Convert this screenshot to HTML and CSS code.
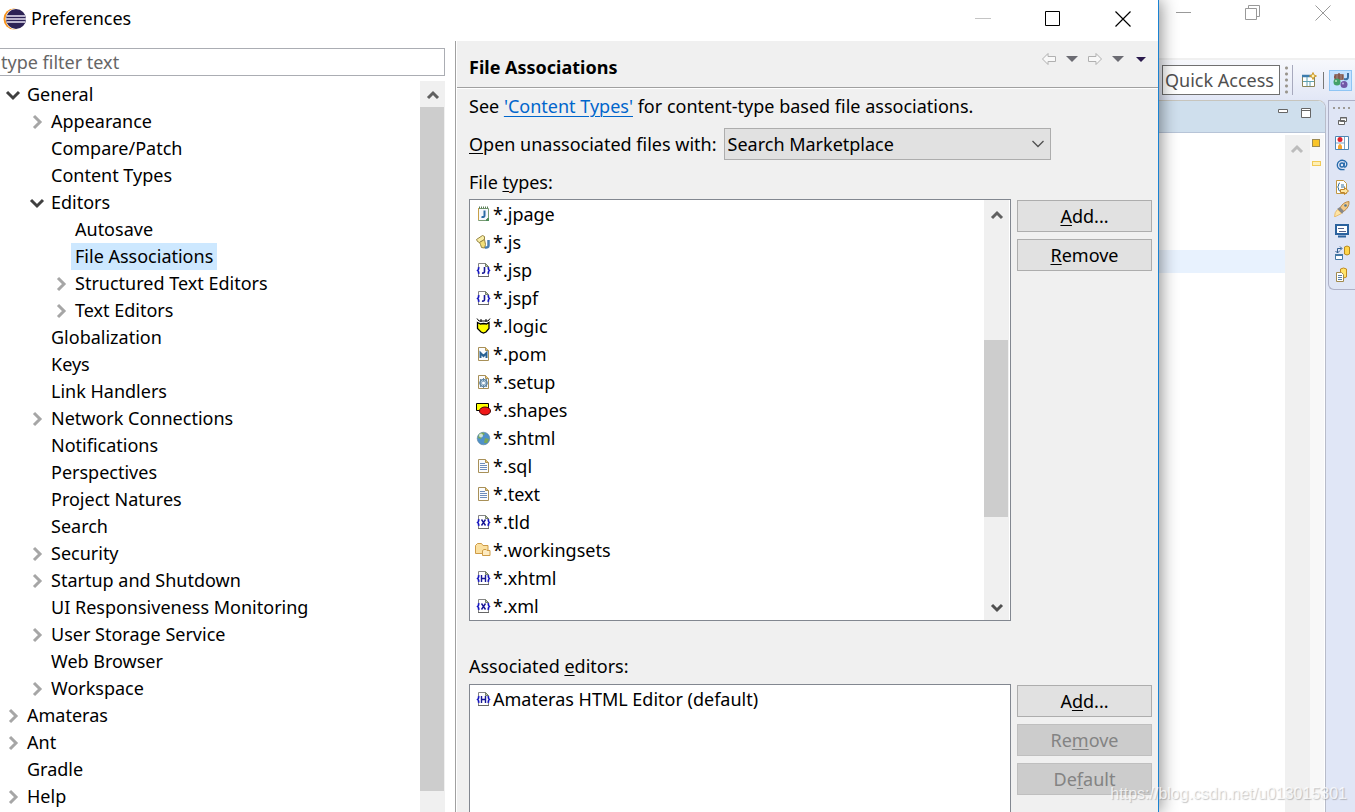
FILE: index.html
```html
<!DOCTYPE html>
<html lang="en">
<head>
<meta charset="utf-8">
<title>Preferences</title>
<link rel="stylesheet" href="styles.css">
</head>
<body>
<svg class="defs" aria-hidden="true">
  <symbol id="open" viewBox="0 0 16 16"><path d="M2 5l6 6 6-6" fill="none" stroke="#404040" stroke-width="3"/></symbol>
  <symbol id="closed" viewBox="0 0 16 16"><path d="M5 2l6 6-6 6" fill="none" stroke="#a6a6a6" stroke-width="3"/></symbol>
  <symbol id="up" viewBox="0 0 14 14"><path d="M2 10l5-5 5 5" fill="none" stroke="#606060" stroke-width="3"/></symbol>
  <symbol id="down" viewBox="0 0 14 14"><path d="M2 4l5 5 5-5" fill="none" stroke="#505050" stroke-width="3"/></symbol>
  <symbol id="back" viewBox="0 0 16 16"><path d="M1.500 8L7 2.500V5.500H14.500V10.500H7V13.500Z" fill="#f8f8f8" stroke="#b0b0b0"/></symbol>
  <symbol id="forward" viewBox="0 0 16 16"><path d="M14.500 8L9 2.500V5.500H1.500V10.500H9V13.500Z" fill="#f8f8f8" stroke="#b0b0b0"/></symbol>
  <symbol id="sheet" viewBox="0 0 16 16"><path d="M3.500 1.500h7l3 3v10h-10z" fill="#fbfcfe" stroke="#a89058"/><path d="M10.500 1.500v3h3" fill="#e9c878" stroke="#a89058"/></symbol>
  <symbol id="code" viewBox="0 0 16 16"><path d="M3.500 5.500v-4h7l3 3v1M3.500 11.500v3h10v-3" fill="#fff" stroke="#858585"/><path d="M10.500 1.500v3h3z" fill="#b9c4ac" stroke="#75806a"/><path d="M3 14.500h11" stroke="#666"/><path d="M4.500 5.500L3.500 6v1.500l-1 1 1 1V11l1 .5M12.500 5.500l1 .5v1.500l1 1-1 1V11l-1 .5" fill="none" stroke="#1515c0" stroke-width="1.500"/></symbol>
  <symbol id="text" viewBox="0 0 16 16"><use href="#sheet"/><path d="M5 5.500h5M5 7.500h7M5 9.500h7M5 11.500h7" stroke="#6d8dbc"/></symbol>
</svg>

<main class="dialog">
  <header class="titlebar">
    <svg class="logo" viewBox="0 0 24 22"><circle cx="12" cy="11" r="10.500" fill="#f7941e"/><circle cx="14" cy="11" r="10.500" fill="#fff"/><circle cx="14" cy="11" r="10" fill="#2c2255"/><path d="M5 8h18M4 11h20M5 14h18" stroke="#e7e3f4" stroke-width="1.600"/></svg>
    <h1>Preferences</h1>
    <button class="winbtn" aria-label="Minimize"><svg viewBox="0 0 16 16"><path d="M0 7.500h16" stroke="#c4c4c4"/></svg></button>
    <button class="winbtn" aria-label="Maximize"><svg viewBox="0 0 16 16"><path d="M.500.500h14v14h-14z" fill="none" stroke="#000"/></svg></button>
    <button class="winbtn" aria-label="Close"><svg viewBox="0 0 16 16"><path d="M.500.500l15 15M15.500.500l-15 15" stroke="#000" stroke-width="1.200"/></svg></button>
  </header>
  <div class="content">
    <nav class="sidebar">
      <input class="filter" type="text" placeholder="type filter text" aria-label="Filter">
      <div class="treebox">
        <ul class="tree">
          <li><span class="node"><svg><use href="#open"/></svg><b>General</b></span>
            <ul>
              <li><span class="node"><svg><use href="#closed"/></svg><b>Appearance</b></span></li>
              <li><span class="node"><svg></svg><b>Compare/Patch</b></span></li>
              <li><span class="node"><svg></svg><b>Content Types</b></span></li>
              <li><span class="node"><svg><use href="#open"/></svg><b>Editors</b></span>
                <ul>
                  <li><span class="node"><svg></svg><b>Autosave</b></span></li>
                  <li><span class="node selected"><svg></svg><b>File Associations</b></span></li>
                  <li><span class="node"><svg><use href="#closed"/></svg><b>Structured Text Editors</b></span></li>
                  <li><span class="node"><svg><use href="#closed"/></svg><b>Text Editors</b></span></li>
                </ul></li>
              <li><span class="node"><svg></svg><b>Globalization</b></span></li>
              <li><span class="node"><svg></svg><b>Keys</b></span></li>
              <li><span class="node"><svg></svg><b>Link Handlers</b></span></li>
              <li><span class="node"><svg><use href="#closed"/></svg><b>Network Connections</b></span></li>
              <li><span class="node"><svg></svg><b>Notifications</b></span></li>
              <li><span class="node"><svg></svg><b>Perspectives</b></span></li>
              <li><span class="node"><svg></svg><b>Project Natures</b></span></li>
              <li><span class="node"><svg></svg><b>Search</b></span></li>
              <li><span class="node"><svg><use href="#closed"/></svg><b>Security</b></span></li>
              <li><span class="node"><svg><use href="#closed"/></svg><b>Startup and Shutdown</b></span></li>
              <li><span class="node"><svg></svg><b>UI Responsiveness Monitoring</b></span></li>
              <li><span class="node"><svg><use href="#closed"/></svg><b>User Storage Service</b></span></li>
              <li><span class="node"><svg></svg><b>Web Browser</b></span></li>
              <li><span class="node"><svg><use href="#closed"/></svg><b>Workspace</b></span></li>
            </ul></li>
          <li><span class="node"><svg><use href="#closed"/></svg><b>Amateras</b></span></li>
          <li><span class="node"><svg><use href="#closed"/></svg><b>Ant</b></span></li>
          <li><span class="node"><svg></svg><b>Gradle</b></span></li>
          <li><span class="node"><svg><use href="#closed"/></svg><b>Help</b></span></li>
        </ul>
        <div class="scroll tree-scroll"><svg><use href="#up"/></svg><i class="thumb"></i></div>
      </div>
    </nav>

    <section class="page">
      <header class="pagehead">
        <h2>File Associations</h2>
        <div class="history">
          <button aria-label="Back"><svg viewBox="0 0 16 16"><use href="#back"/></svg></button>
          <button aria-label="Back history"><svg viewBox="0 0 16 16"><path d="M2 5h12L8 11z" fill="#6b6b72"/></svg></button>
          <button aria-label="Forward"><svg viewBox="0 0 16 16"><use href="#forward"/></svg></button>
          <button aria-label="Forward history"><svg viewBox="0 0 16 16"><path d="M2 5h12L8 11z" fill="#6b6b72"/></svg></button>
          <button aria-label="Menu"><svg viewBox="0 0 16 16"><path d="M3 6h10L8 11z" fill="#2b1b4d"/></svg></button>
        </div>
      </header>
      <div class="form">
        <p class="line">See <a href="#types">'Content Types'</a> for content-type based file associations.</p>
        <div class="openwith">
          <label for="with"><u>O</u>pen unassociated files with:</label>
          <span class="combo"><select id="with"><option>Search Marketplace</option></select><svg viewBox="0 0 12 8"><path d="M.500 1l5.500 5.500L11.500 1" fill="none" stroke="#505050" stroke-width="1.300"/></svg></span>
        </div>
        <p class="line types" id="types">File <u>t</u>ypes:</p>
        <div class="pair">
          <div class="list">
            <ul>
              <li><svg viewBox="0 0 16 16"><path d="M3.500 2.500h10v9l-3 3h-7z" fill="#f4f8fd" stroke="#789a72"/><path d="M3.500 2v12" stroke="#c8a048"/><path d="M4 1.500h10" stroke="#5b7c58" stroke-width="2" stroke-dasharray="1 1"/><path d="M10 15l4-4v4z" fill="#4c8c58"/><path d="M9.500 4.500v5q0 2-3 1.500" fill="none" stroke="#2b6ca5" stroke-width="2"/></svg>*.jpage</li>
              <li><svg viewBox="0 0 16 16"><path d="M1.500 5.500l6-4 2 1v3l-5 3-2-1z" fill="#f8eda6" stroke="#958442"/><path d="M4.500 8.500l5-3 1 5-1 3.500-3-.500-1-3z" fill="#f2df79" stroke="#958442"/><path d="M13.500 6v5.500q0 2.500-3.500 2" fill="none" stroke="#487db1" stroke-width="2.500"/></svg>*.js</li>
              <li><svg viewBox="0 0 16 16"><use href="#code"/><path d="M9.500 5v4.500q0 2-2.500 1.500" fill="none" stroke="#171794" stroke-width="1.600"/></svg>*.jsp</li>
              <li><svg viewBox="0 0 16 16"><use href="#code"/><path d="M9.500 5v4.500q0 2-2.500 1.500" fill="none" stroke="#171794" stroke-width="1.600"/></svg>*.jspf</li>
              <li><svg viewBox="0 0 16 16"><path d="M2.500 4.500l3 1.500 3-.500 3 .500 2.500-1.500v6L11 14l-2.500 1L6 14l-3.500-3.500z" fill="#ff0" stroke="#000" stroke-width="1.300"/><path d="M2 .500l2 2.500h9l2-2.500M6 1v3M11 1v3" fill="none" stroke="#000"/></svg>*.logic</li>
              <li><svg viewBox="0 0 16 16"><use href="#sheet"/><path d="M5.500 12V7l3 3 3-3v5" fill="none" stroke="#2a6293" stroke-width="2"/></svg>*.pom</li>
              <li><svg viewBox="0 0 16 16"><use href="#sheet"/><circle cx="8.500" cy="9" r="3.500" fill="#c9deee" stroke="#557893" stroke-width="1.200"/><path d="M5 5l7 8M12 5l-7 8M8.500 4v10M4 9h9" stroke="#648aa8"/><circle cx="8.500" cy="9" r="1.500" fill="#fff"/></svg>*.setup</li>
              <li><svg viewBox="0 0 16 16"><path d="M1.500 1.500h12v7h-12z" fill="#ff0" stroke="#000"/><ellipse cx="10" cy="9" rx="5.500" ry="4" fill="#f01818" stroke="#400"/></svg>*.shapes</li>
              <li><svg viewBox="0 0 16 16"><circle cx="8.500" cy="8.500" r="6.300" fill="#4f91c9" stroke="#5b8298" stroke-width=".6"/><path d="M4 4q4-3 6 0l-3 2-1 3-3-1zM10 8l4 1-2 4-3 0z" fill="#78a857"/><circle cx="6" cy="5.500" r="2" fill="#e6f1f4" opacity=".8"/></svg>*.shtml</li>
              <li><svg><use href="#text"/></svg>*.sql</li>
              <li><svg><use href="#text"/></svg>*.text</li>
              <li><svg viewBox="0 0 16 16"><use href="#code"/><path d="M6.500 5.500l4 6M10.500 5.500l-4 6" stroke="#171794" stroke-width="1.400"/></svg>*.tld</li>
              <li><svg viewBox="0 0 16 16"><path d="M.500 11.500v-8l2-2h4l1.500 2h5v8z" fill="#fbe0a0" stroke="#ce9b46"/><path d="M7.500 13.500v-5l1.500-1h2l1 1h3v5z" fill="#fdebc2" stroke="#ce9b46"/></svg>*.workingsets</li>
              <li><svg viewBox="0 0 16 16"><use href="#code"/><path d="M6.500 5v7M10.500 5v7M6.500 8.500h4" stroke="#171794" stroke-width="1.400"/></svg>*.xhtml</li>
              <li><svg viewBox="0 0 16 16"><use href="#code"/><path d="M6.500 5.500l4 6M10.500 5.500l-4 6" stroke="#171794" stroke-width="1.400"/></svg>*.xml</li>
            </ul>
            <div class="scroll list-scroll"><svg><use href="#up"/></svg><i class="thumb"></i><svg><use href="#down"/></svg></div>
          </div>
          <div class="buttons"><button><u>A</u>dd...</button><button><u>R</u>emove</button></div>
        </div>
        <p class="line editors">Associated <u>e</u>ditors:</p>
        <div class="pair grow">
          <div class="list">
            <ul><li><svg viewBox="0 0 16 16"><use href="#code"/><path d="M6.500 5v7M10.500 5v7M6.500 8.500h4" stroke="#171794" stroke-width="1.400"/></svg>Amateras HTML Editor (default)</li></ul>
          </div>
          <div class="buttons"><button>A<u>d</u>d...</button><button disabled>Re<u>m</u>ove</button><button disabled>De<u>f</u>ault</button></div>
        </div>
      </div>
    </section>
  </div>
</main>

<aside class="workbench">
  <div class="maintitle">
    <button aria-label="Minimize window"><svg viewBox="0 0 16 16"><path d="M1 7.500h15" stroke="#999"/></svg></button>
    <button aria-label="Restore window"><svg viewBox="0 0 16 16"><path d="M.500 3.500h11v11H.500zM3.500 3V.500h11v11H12" fill="none" stroke="#999"/></svg></button>
    <button aria-label="Close window"><svg viewBox="0 0 16 16"><path d="M.500.500l15 15M15.500.500l-15 15" stroke="#999"/></svg></button>
  </div>
  <div class="toolbar">
    <input class="quick" type="text" placeholder="Quick Access" aria-label="Quick Access">
    <i class="grip"></i>
    <button aria-label="Open perspective"><svg viewBox="0 0 16 16"><path d="M1.500 3.500h12v11h-12z" fill="#fff" stroke="#8a855a"/><path d="M1 4h10" stroke="#3d7cae" stroke-width="2.500"/><path d="M6 5v9M2 9.500h11M9 10v4" stroke="#5fa1b1"/><path d="M12 .500l1 2.500 2.500 1L13 5l-1 2.500L11 5 8.500 4 11 3z" fill="#fff3b0" stroke="#d09a2a"/></svg></button>
    <i class="sep"></i>
    <button class="active" aria-label="Java EE"><svg viewBox="0 0 18 18"><path d="M3 4h8v4H3zM7 2v8M2 6h9" fill="none" stroke="#824d3c" stroke-width="1.300"/><path d="M16 2v4q0 3-4 2" fill="none" stroke="#3970a5" stroke-width="2"/><circle cx="5" cy="11" r="3.500" fill="#42a168"/><circle cx="12" cy="13.500" r="3.500" fill="#7157a6"/><circle cx="4" cy="10" r="1" fill="#b9e2bd"/><circle cx="11" cy="12.500" r="1" fill="#c3b5e5"/></svg></button>
  </div>
  <div class="workarea">
    <div class="editor">
      <div class="tabs">
        <button aria-label="Minimize view"><svg viewBox="0 0 12 12"><path d="M1.500 2.500h9v3h-9z" fill="#fff" stroke="#666"/></svg></button>
        <button aria-label="Maximize view"><svg viewBox="0 0 12 12"><path d="M1.500 1.500h9v9h-9zM1.500 3.500h9" fill="#fff" stroke="#666"/></svg></button>
      </div>
      <div class="source">
        <div class="code"><i class="current"></i></div>
        <div class="gutter"><svg viewBox="0 0 14 14"><path d="M2 10l5-5 5 5" fill="none" stroke="#bcbcbc" stroke-width="3"/></svg></div>
        <div class="ruler"><i class="mark"></i><i class="warn"></i></div>
      </div>
    </div>
    <div class="trim">
      <div class="views">
        <i class="dots"></i>
        <button aria-label="Restore"><svg viewBox="0 0 16 16"><path d="M6.500 4.500h6v4h-6zM4.500 7.500h6v4h-6z" fill="#fff" stroke="#666"/><path d="M6 5h7M4 8h7" stroke="#666"/></svg></button>
        <button aria-label="Markers"><svg viewBox="0 0 16 16"><path d="M1.500 1.500h13v13h-13z" fill="#fff" stroke="#4d86b4"/><path d="M2 8h9M10.500 2v12" stroke="#7ca5c7"/><circle cx="6" cy="4.500" r="2.500" fill="#df2430"/><path d="M4 14v-3q2-4 4 0v3z" fill="#f5a531"/></svg></button>
        <button aria-label="Properties"><svg viewBox="0 0 16 16"><circle cx="8" cy="8" r="2" fill="none" stroke="#276bac" stroke-width="1.400"/><path d="M10.500 5.500l-.5 3.500q0 1.500 1.500 1 2-2 1-4.500-2-3-6-2-4 2-3 6 1.500 4 7 3" fill="none" stroke="#276bac" stroke-width="1.300"/></svg></button>
        <button aria-label="Snippets"><svg viewBox="0 0 16 16"><path d="M2.500 1.500h7l3 3v10h-10z" fill="#fff" stroke="#c19742"/><path d="M6 4q-1.500 0-1.500 2v1L3.500 8l1 1v1q0 2 1.500 2M7 6h3M7 8h4" fill="none" stroke="#36729e"/><path d="M6.500 10.500h4V8.500l4 3.500-4 3.500v-2h-4z" fill="#ffe6a0" stroke="#be8229"/></svg></button>
        <button aria-label="Launch"><svg viewBox="0 0 16 16"><path d="M6 7q3-6 9-6.500.5 6-5.500 10z" fill="#f2c887" stroke="#bb8b4a"/><path d="M6 6l4 4-2 3-5-5z" fill="#888"/><path d="M3.500 8.500l4 4L.500 16q0-5 3-7.500z" fill="#ffe4a4" stroke="#e7bd72"/><circle cx="11.500" cy="4.500" r="1.300" fill="#517891"/></svg></button>
        <button aria-label="Console"><svg viewBox="0 0 16 16"><path d="M2 2h12v9H2z" fill="#fff" stroke="#2b629e" stroke-width="2"/><path d="M4 5.500h6M5 8.500h7" stroke="#52628c"/><path d="M4 13.500h8" stroke="#2b629e" stroke-width="2"/></svg></button>
        <button aria-label="Data Source"><svg viewBox="0 0 16 16"><path d="M1.500 9.500h7v5h-7z" fill="#fff" stroke="#4579a5"/><path d="M1 10h8" stroke="#4579a5" stroke-width="2"/><path d="M3.500 8V3.500h4M1.500 6l2 2 2-2M6 1.500l2 2-2 2" fill="none" stroke="#315f91"/><path d="M10.500 2v7q2.500 2 5 0V2q-2.500-2-5 0z" fill="#ffd548" stroke="#b88a20"/></svg></button>
        <button aria-label="History"><svg viewBox="0 0 16 16"><path d="M6.500 2v8q3 2 6 0V2q-3-2-6 0z" fill="#ffe36b" stroke="#c18a21"/><path d="M2.500 5.500h5l2 2v7h-7z" fill="#fff" stroke="#a18a4d"/><path d="M4 8.500h4M4 10.500h4M4 12.500h4" stroke="#5780a8"/></svg></button>
      </div>
    </div>
  </div>
</aside>
<p class="watermark">https://blog.csdn.net/u013015301</p>
</body>
</html>
```
FILE: styles.css
```css
* { box-sizing: border-box; }
body {
  margin: 0;
  height: 100vh;
  display: flex;
  overflow: hidden;
  background: #fff;
  color: #000;
  font: 18px/27px "Noto Sans", sans-serif;
}
h1, h2, p, ul { margin: 0; padding: 0; font-size: inherit; }
ul { list-style: none; }
svg { display: block; flex: none; }
button, input, select { font: inherit; color: inherit; }
button { padding: 0; border: 0; background: none; }
u { text-underline-offset: 2px; text-decoration-thickness: 1px; }
.defs { position: absolute; width: 0; height: 0; }

.dialog {
  flex: 1;
  min-width: 0;
  display: flex;
  flex-direction: column;
  z-index: 1;
  background: #fff;
  border-right: 1px solid #1a82d2;
  box-shadow: 2px 0 16px rgba(0, 0, 0, .45);
}
.titlebar { display: flex; align-items: center; height: 41px; padding: 0 27px 4px 2px; }
.logo { width: 24px; height: 22px; }
.titlebar h1 { flex: 1; padding-left: 5px; font-weight: 400; }
.winbtn { margin-left: 54px; }
.winbtn svg { width: 16px; height: 16px; }
.content { flex: 1; min-height: 0; display: flex; }

.sidebar {
  flex: 0 0 456px;
  display: flex;
  flex-direction: column;
  padding: 7px 10px 0 0;
  border-right: 1px solid #a0a0a0;
}
.filter {
  height: 28px;
  padding: 0 1px;
  border: 1px solid #abadb3;
  border-left: 0;
  outline: 0;
}
.filter::placeholder { color: #666; opacity: 1; }
.treebox { flex: 1; min-height: 0; display: flex; margin-top: 5px; }
.tree { flex: 1; overflow: hidden; }
.tree ul { padding-left: 24px; }
.node { display: flex; align-items: center; height: 27px; }
.node svg { width: 16px; height: 16px; margin: 0 2px 0 5px; }
.node b { padding: 0 4px; font-weight: 400; }
.selected b { background: #cde8ff; }
.scroll { flex: 0 0 25px; display: flex; flex-direction: column; align-items: center; background: #f0f0f0; }
.scroll svg { width: 14px; height: 14px; margin: 7px 0 5px; }
.thumb { align-self: flex-start; width: 24px; background: #cdcdcd; }
.tree-scroll .thumb { flex: 1; margin-bottom: 21px; }

.page { flex: 1; min-width: 0; display: flex; flex-direction: column; margin-left: 1px; background: #f0f0f0; }
.pagehead {
  display: flex;
  justify-content: space-between;
  height: 47px;
  padding: 10px 9px 0 12px;
  border-bottom: 1px solid #a0a0a0;
  box-shadow: 0 1px #fff;
}
h2 { line-height: 32px; }
.history { display: flex; gap: 7px; }
.history svg { width: 16px; height: 16px; }
.history button { display: flex; }
.form { flex: 1; min-height: 0; display: flex; flex-direction: column; padding: 5px 6px 0 12px; }
.line { line-height: 27px; }
a { color: #0066cc; text-underline-offset: 3px; text-decoration-thickness: 1px; }
.openwith { display: flex; align-items: center; gap: 7px; margin-top: 8px; }
.combo { flex: 0 1 327px; display: grid; align-items: center; }
.combo select {
  grid-area: 1 / 1;
  width: 100%;
  height: 32px;
  padding: 0 3px;
  border: 1px solid #adadad;
  border-radius: 0;
  background: #e1e1e1;
  appearance: none;
}
.combo svg { grid-area: 1 / 1; justify-self: end; width: 12px; height: 8px; margin-right: 7px; pointer-events: none; }
.types { margin: 9px 0 3px; }
.pair { display: flex; gap: 6px; }
.grow { flex: 1; min-height: 0; }
.list { flex: 1; min-width: 0; display: flex; padding-right: 1px; background: #fff; border: 1px solid #828790; }
.grow .list { border-bottom: 0; }
.list ul { flex: 1; }
.list li { display: flex; align-items: center; gap: 2px; height: 28px; padding-left: 5px; }
.list li svg { width: 16px; height: 16px; }
.list-scroll svg:first-child { margin-top: 8px; }
.list-scroll .thumb { height: 177px; margin: 113px 0 auto; }
.buttons { flex: 0 0 135px; display: flex; flex-direction: column; gap: 7px; padding-top: 1px; }
.buttons button { height: 32px; border: 1px solid #adadad; background: #e1e1e1; }
.buttons button:disabled { border-color: #bfbfbf; background: #ccc; color: #838383; }
.editors { margin: 32px 0 4px; }

.workbench { flex: 0 0 196px; display: flex; flex-direction: column; }
.maintitle { display: flex; justify-content: space-between; height: 60px; padding: 5px 24px 0 16px; border-bottom: 2px solid #f0f0f0; }
.maintitle button { height: 16px; }
.maintitle svg { width: 16px; height: 16px; }
.toolbar {
  display: flex;
  align-items: center;
  height: 40px;
  padding-left: 3px;
  background: linear-gradient(#f7f8fc, #e2e7f6);
}
.quick { width: 118px; height: 30px; padding: 0 2px; border: 1px solid #707070; background: #fff; }
.quick::placeholder { color: #505050; opacity: 1; }
.grip { width: 10px; height: 30px; margin: 0 8px 0 3px; border-right: 1px solid #a7a9bd; background: radial-gradient(circle, #99958d 1px, transparent 2px) -2px 0 / 11px 6px repeat-y; }
.toolbar svg { width: 16px; height: 16px; }
.sep { width: 1px; height: 17px; margin: 0 5px 0 6px; background: #777; }
.toolbar .active { display: grid; place-items: center; width: 23px; height: 21px; border: 1px solid #8fc5f4; background: #c4e2ff; }
.toolbar .active svg { width: 18px; height: 18px; }
.workarea { flex: 1; display: flex; background: #e0e6f6; }
.editor { flex: 1; display: flex; flex-direction: column; border-right: 1px solid #b8bcc9; border-top: 1px solid #c7c5bd; border-radius: 0 8px 0 0; overflow: hidden; background: #fff; }
.tabs { display: flex; justify-content: flex-end; gap: 11px; height: 32px; padding: 6px 13px 0 0; border-bottom: 1px solid #b7c4d7; background: #cfdfed; }
.tabs button { height: 12px; }
.tabs svg { width: 12px; height: 12px; }
.source { flex: 1; display: flex; padding: 2px 1px 0 0; }
.code { flex: 1; padding-top: 115px; }
.current { display: block; height: 23px; background: #e8f2fe; }
.gutter { flex: 0 0 25px; background: #f0f0f0; }
.gutter svg { width: 14px; height: 14px; margin: 7px 5px; }
.ruler { flex: 0 0 14px; padding: 4px 2px; background: #f8f8f8; }
.mark, .warn { display: block; width: 8px; height: 8px; background: #f9c52a; border: 1px solid #9d8b52; }
.warn { width: 9px; height: 5px; margin-top: 14px; background: #fff0b5; border-color: #f1ca58; }
.trim { flex: 0 0 29px; padding-left: 2px; }
.views { height: 190px; display: flex; flex-direction: column; align-items: center; gap: 6px; padding: 6px 1px 0 0; border: 1px solid #aeb1c7; border-right: 0; border-radius: 0 0 0 6px; background: #dfe5f5; }
.views button svg { width: 16px; height: 16px; }
.views .dots { width: 17px; height: 2px; margin-bottom: -2px; background: repeating-linear-gradient(90deg, #9d9a95 0 2px, transparent 2px 5px); }
.watermark {
  position: absolute;
  right: 8px;
  bottom: 6px;
  z-index: 2;
  color: rgba(255, 255, 255, .75);
  font: 16px/24px "Liberation Sans", sans-serif;
  text-shadow: 1px 1px 1px rgba(110, 110, 110, .4);
}
```
